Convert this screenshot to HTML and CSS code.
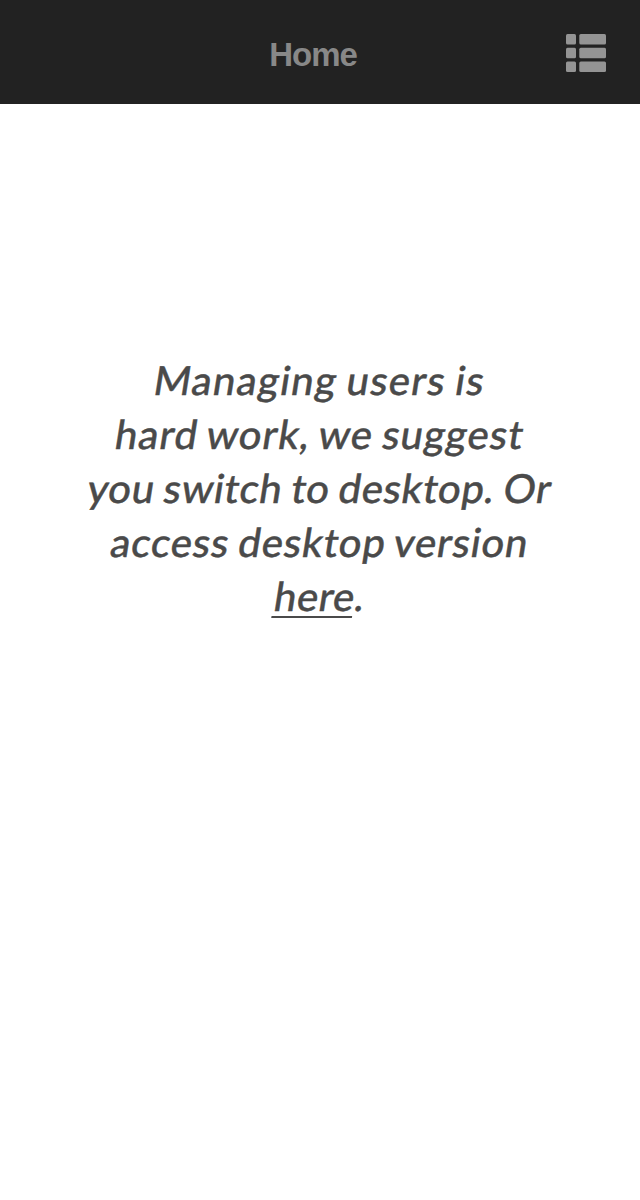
FILE: index.html
```html
<!DOCTYPE html>
<html lang="en">
<head>
<meta charset="utf-8">
<title>Home</title>
<link rel="stylesheet" href="styles.css">
</head>
<body>
<header class="navbar">
<h1 class="title">Home</h1>
<button class="menu" aria-label="Menu">
<svg class="menu-icon" width="40" height="38" viewBox="0 0 40 38"><rect width="10" height="10.6" rx="1.5"/><rect x="13.3" width="26.7" height="10.6" rx="1.5"/><rect y="13.7" width="10" height="10.6" rx="1.5"/><rect x="13.3" y="13.7" width="26.7" height="10.6" rx="1.5"/><rect y="27.4" width="10" height="10.6" rx="1.5"/><rect x="13.3" y="27.4" width="26.7" height="10.6" rx="1.5"/></svg>
</button>
</header>
<main class="content">
<p class="message"><span class="line l1">Managing users is</span> <span class="line l2">hard work, we suggest</span> <span class="line l3">you switch to desktop. Or</span> <span class="line l4">access desktop version</span> <span class="line l5"><a class="link" href="#">here</a>.</span></p>
</main>
</body>
</html>
```
FILE: styles.css
```css
body { margin: 0; background: #fff; }
.navbar { box-sizing: border-box; display: grid; grid-template-columns: 74px 1fr 74px; align-items: center; height: 104px; padding: 0 34px 0 20px; background: #222; }
.title { grid-column: 2; margin: 6px 0 0; font: bold 33px/40px "Liberation Sans", Arial, sans-serif; letter-spacing: -1.1px; color: #888; text-align: center; }
.menu { justify-self: end; margin: 2px 0 0; padding: 0; border: 0; background: none; }
.menu-icon { display: block; fill: #949494; }
.content { padding-top: 249px; }
.message { margin: 0; font: 500 40px/54px Lato, sans-serif; word-spacing: -2px; color: #4a4a4a; -webkit-text-stroke: 0.4px #4a4a4a; text-align: center; }
/* Slanted roman letterforms, keeping the single-storey g */
.line { display: block; transform: skewX(-9deg); }
.l1 { letter-spacing: 1.3px; }
.l2 { letter-spacing: 1.05px; }
.l3 { letter-spacing: 0.7px; }
.l4 { letter-spacing: 0.9px; }
.l5 { letter-spacing: 0.5px; }
.link { color: inherit; text-decoration: underline; text-decoration-thickness: 2px; text-underline-offset: 5px; text-decoration-skip-ink: none; }
```
